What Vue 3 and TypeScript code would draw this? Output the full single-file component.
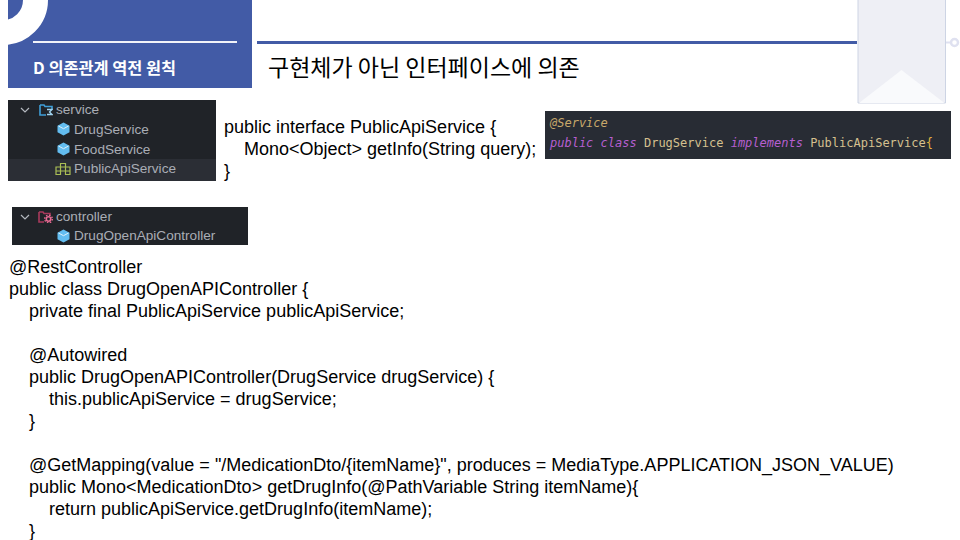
<script setup lang="ts">
const code: string[] = [
  '@RestController',
  'public class DrugOpenAPIController {',
  '    private final PublicApiService publicApiService;',
  '',
  '    @Autowired',
  '    public DrugOpenAPIController(DrugService drugService) {',
  '        this.publicApiService = drugService;',
  '    }',
  '',
  '    @GetMapping(value = "/MedicationDto/{itemName}", produces = MediaType.APPLICATION_JSON_VALUE)',
  '    public Mono<MedicationDto> getDrugInfo(@PathVariable String itemName){',
  '        return publicApiService.getDrugInfo(itemName);',
  '    }'
]
const iface: string[] = [
  'public interface PublicApiService {',
  '    Mono<Object> getInfo(String query);',
  '}'
]
</script>

<template>
  <div class="slide">
    <header class="head">
      <div class="banner">
        <div class="rule"></div>
        <div class="chapter">D 의존관계 역전 원칙</div>
      </div>
      <div class="headline">
        <div class="bar"></div>
        <h1 class="title">구현체가 아닌 인터페이스에 의존</h1>
      </div>
    </header>

    <svg class="ribbon" width="106" height="105" viewBox="0 0 106 105">
      <path d="M1 0V103H88.500V0" fill="#eeeff5" stroke="#cdd4e4" stroke-width="1" />
      <path d="M2 103L44.500 70L87.500 103Z" fill="#f9fafc" />
      <path d="M89 42.500H94" stroke="#dfe1f0" stroke-width="2" />
      <circle cx="97.500" cy="42.500" r="3.500" fill="#fff" stroke="#dfe1f0" stroke-width="2.500" />
    </svg>

    <section class="row">
      <div class="tree service">
        <div class="node folder">
          <svg class="chev" width="10" height="6" viewBox="0 0 10 6"><path d="M1 1L5 5L9 1" fill="none" stroke="#b4b8bf" stroke-width="1.200" /></svg>
          <svg class="ficon" width="14" height="12" viewBox="0 0 14 12"><path d="M1 1H5L6 2.500H13V5M7 11H1V1" fill="none" stroke="#3f9fd8" stroke-width="1.600" /><path d="M8 5.500H13L10.500 8L13 10.500H8" fill="none" stroke="#9fd2ee" stroke-width="1.300" /></svg>
          <span>service</span>
        </div>
        <div class="node leaf">
          <svg width="13" height="14" viewBox="0 0 13 14"><path d="M6.500 0.500L12.500 3.700V10.300L6.500 13.500L0.500 10.300V3.700Z" fill="#63bdf0" /><path d="M1.500 4L6.500 6.700L11.500 4" fill="none" stroke="#dff1fb" stroke-width="1" /></svg>
          <span>DrugService</span>
        </div>
        <div class="node leaf">
          <svg width="13" height="14" viewBox="0 0 13 14"><path d="M6.500 0.500L12.500 3.700V10.300L6.500 13.500L0.500 10.300V3.700Z" fill="#63bdf0" /><path d="M1.500 4L6.500 6.700L11.500 4" fill="none" stroke="#dff1fb" stroke-width="1" /></svg>
          <span>FoodService</span>
        </div>
        <div class="node leaf active">
          <svg width="16" height="14" viewBox="0 0 16 14"><path d="M5.500 1.500H10.500V5H5.500ZM1 5H15V9H1ZM5.500 5V9M10.500 5V9M10.500 9H15V12.500H10.500ZM1 9H5.500V12.500H1Z" fill="none" stroke="#a9bd55" stroke-width="1.200" /></svg>
          <span>PublicApiService</span>
        </div>
      </div>

      <pre class="code iface"><template v-for="line in iface" :key="line">{{ line }}
</template></pre>

      <div class="editor">
        <div class="annot">@Service</div>
        <div><i class="kw">public class</i> <span class="cls">DrugService</span> <i class="kw">implements</i> <span class="cls">PublicApiService</span><span class="brace">{</span></div>
      </div>
    </section>

    <div class="tree controller">
      <div class="node folder">
        <svg class="chev" width="10" height="6" viewBox="0 0 10 6"><path d="M1 1L5 5L9 1" fill="none" stroke="#b4b8bf" stroke-width="1.200" /></svg>
        <svg class="ficon" width="15" height="12" viewBox="0 0 15 12"><path d="M1 1H5L6 2.500H12V5M6 11H1V1" fill="none" stroke="#a83a5c" stroke-width="1.600" /><circle cx="10.500" cy="8" r="3.800" fill="none" stroke="#e66a93" stroke-width="1.400" stroke-dasharray="1.500 1.480" /><circle cx="10.500" cy="8" r="2.200" fill="none" stroke="#e66a93" stroke-width="1.600" /></svg>
        <span>controller</span>
      </div>
      <div class="node leaf">
        <svg width="13" height="14" viewBox="0 0 13 14"><path d="M6.500 0.500L12.500 3.700V10.300L6.500 13.500L0.500 10.300V3.700Z" fill="#63bdf0" /><path d="M1.500 4L6.500 6.700L11.500 4" fill="none" stroke="#dff1fb" stroke-width="1" /></svg>
        <span>DrugOpenApiController</span>
      </div>
    </div>

    <pre class="code main"><template v-for="(line, i) in code" :key="i">{{ line }}
</template></pre>
  </div>
</template>

<style>
html, body { margin: 0; background: #fff; }
</style>

<style scoped>
.slide {
  position: relative;
  width: 960px;
  height: 540px;
  overflow: hidden;
  background: #fff;
  font-family: "Liberation Sans", Arial, "Noto Sans CJK KR", sans-serif;
  color: #000;
}
.head { display: flex; height: 88px; padding-left: 8px; }
.banner {
  position: relative;
  box-sizing: border-box;
  width: 244px;
  height: 88px;
  padding: 41px 0 0 25px;
  background: #425ba6;
  overflow: hidden;
}
.banner::before {
  content: "";
  position: absolute;
  left: -50px;
  top: -45px;
  width: 40px;
  height: 40px;
  border: 25px solid #fff;
  border-radius: 50%;
}
.rule { width: 204px; height: 2px; background: #f2f3f8; }
.chapter {
  margin-top: 13px;
  font-size: 16.350px;
  line-height: 22px;
  font-weight: 700;
  color: #fff;
  font-family: "Noto Sans CJK KR", "Noto Sans", sans-serif;
}
.headline { flex: 1; padding: 41px 0 0 5px; }
.bar { width: 600px; height: 3px; background: #425ba6; }
.title {
  margin: 6px 0 0 11px;
  font-size: 23px;
  line-height: 32px;
  font-weight: 400;
  font-family: "Noto Sans CJK KR", sans-serif;
}
.ribbon { position: absolute; left: 857px; top: 0; }
.row { display: flex; align-items: flex-start; height: 81px; margin-top: 12px; padding-left: 8px; }
.tree {
  box-sizing: border-box;
  background: #202328;
  color: #a9adb5;
  font-size: 13.600px;
}
.service { width: 208px; height: 81px; }
.controller { width: 236px; height: 38px; margin: 26px 0 0 12px; }
.node { display: flex; align-items: center; height: 19.670px; }
.controller .node { height: 19px; }
.folder { padding-left: 12px; }
.controller .folder { padding-left: 8px; }
.chev { margin-right: 9px; }
.controller .chev { margin-right: 8px; }
.ficon { margin-right: 3px; }
.leaf { padding-left: 49px; }
.controller .leaf { padding-left: 45px; }
.leaf svg { margin-right: 4px; flex: none; }
.active { height: 20px; padding: 0 0 2px 47px; background: #2b2e35; }
.active svg { margin-right: 3px; }
.code {
  margin: 0;
  font-family: "Liberation Sans", Arial, sans-serif;
  font-size: 18px;
  line-height: 22px;
  white-space: pre;
}
.iface { margin: 16px 0 0 8px; width: 321px; }
.editor {
  box-sizing: border-box;
  width: 406px;
  height: 48px;
  margin-top: 11px;
  padding: 3px 0 0 5px;
  background: #282c34;
  font-family: "DejaVu Sans Mono", "Liberation Mono", monospace;
  font-size: 12px;
  line-height: 19.500px;
  white-space: nowrap;
}
.annot { color: #c9a86a; font-style: italic; }
.kw { color: #b65fd0; }
.cls { color: #d5c08f; }
.brace { color: #e3b341; }
.main { margin: 11px 0 0 9px; }
</style>
